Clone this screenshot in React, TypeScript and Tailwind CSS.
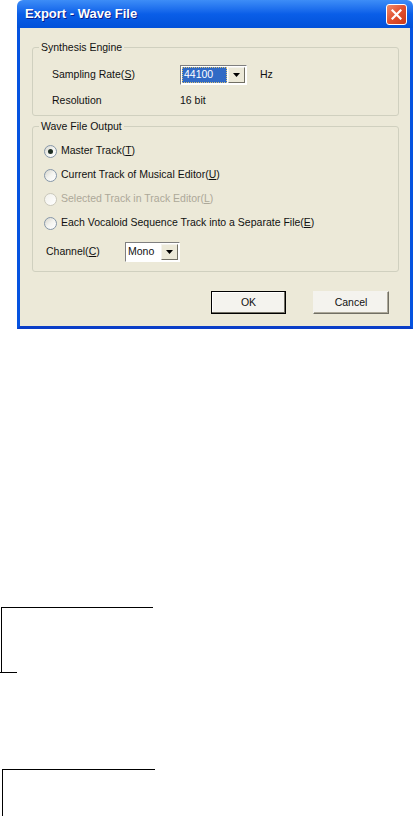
import React from "react";

const Radio = ({ checked, disabled }: { checked?: boolean; disabled?: boolean }) => (
  <span
    className={`flex h-[13px] w-[13px] shrink-0 items-center justify-center rounded-full border bg-gradient-to-br ${
      disabled
        ? "border-[#CAC8BB] from-[#F2F1EB] to-white"
        : "border-[#8596A8] from-[#D6D5CC] via-[#F4F4F0] to-white"
    }`}
  >
    {checked && <span className="h-[5px] w-[5px] rounded-full bg-[#1F2F24]" />}
  </span>
);

const Arrow = () => (
  <span className="flex h-full w-[17px] items-center justify-center border border-t-[#F4F3EE] border-l-[#F4F3EE] border-r-[#716F64] border-b-[#716F64] bg-[#ECE9D8]">
    <svg width="7" height="4" viewBox="0 0 7 4">
      <path d="M0 0h7L3.5 4z" fill="#000" />
    </svg>
  </span>
);

const Mn = ({ c }: { c: string }) => <span className="underline underline-offset-1">{c}</span>;

const App = () => {
  return (
    <div className="min-h-[816px] bg-white font-['Tahoma','Liberation_Sans',sans-serif] text-[10.5px] text-[#111]">
      {/* Dialog window */}
      <div className="ml-[17px] w-[396px]">
        <div className="flex h-[28px] items-center justify-between rounded-t-[6px] bg-gradient-to-b from-[#3D8DF7] via-[#0A5EE8] to-[#0251D9] pl-[8px] pr-[6px]">
          <span className="font-['Liberation_Sans',sans-serif] text-[13px] font-bold text-white [text-shadow:1px_1px_0_#0A1E8C]">
            Export - Wave File
          </span>
          <span className="flex h-[21px] w-[21px] items-center justify-center rounded-[3px] border border-white bg-gradient-to-br from-[#F08A6A] via-[#E0502E] to-[#C93A1A]">
            <svg width="11" height="11" viewBox="0 0 11 11">
              <path d="M1.5 1.5l8 8M9.5 1.5l-8 8" stroke="#fff" strokeWidth="2.2" strokeLinecap="square" />
            </svg>
          </span>
        </div>

        <div className="border-x-[3px] border-b-[3px] border-x-[#0553E0] border-b-[#0A3EC8] bg-[#ECE9D8] pb-[12px] pl-[12px] pr-[11px] pt-[13px]">
          {/* Synthesis Engine */}
          <fieldset className="rounded-[3px] border border-[#D0D0BF] pb-[8px]">
            <legend className="ml-[6px] px-[2px] leading-[13px]">Synthesis Engine</legend>
            <div className="pl-[19px]">
              <div className="mt-[11px] flex h-[20px] items-center">
                <span className="w-[128px]">
                  Sampling Rate(<Mn c="S" />)
                </span>
                <div className="flex h-[20px] w-[67px] items-center border border-t-[#7F7F7F] border-l-[#7F7F7F] border-r-white border-b-white bg-white p-[1px]">
                  <span className="mr-[1px] flex h-full flex-1 items-center border border-dotted border-[#D9C47A] bg-[#316AC5] pl-[1px] text-white">
                    44100
                  </span>
                  <Arrow />
                </div>
                <span className="ml-[13px]">Hz</span>
              </div>
              <div className="mt-[9px] flex h-[13px] items-center leading-[13px]">
                <span className="w-[128px]">Resolution</span>
                <span>16 bit</span>
              </div>
            </div>
          </fieldset>

          {/* Wave File Output */}
          <fieldset className="mt-[4px] rounded-[3px] border border-[#D0D0BF] pb-[9px]">
            <legend className="ml-[6px] px-[2px] leading-[13px]">Wave File Output</legend>
            <div className="mt-[10px] flex flex-col gap-[8px] pl-[11px]">
              <div className="flex h-[16px] items-center gap-[4px]">
                <Radio checked />
                <span>
                  Master Track(<Mn c="T" />)
                </span>
              </div>
              <div className="flex h-[16px] items-center gap-[4px]">
                <Radio />
                <span>
                  Current Track of Musical Editor(<Mn c="U" />)
                </span>
              </div>
              <div className="flex h-[16px] items-center gap-[4px] text-[#ACA899]">
                <Radio disabled />
                <span>
                  Selected Track in Track Editor(<Mn c="L" />)
                </span>
              </div>
              <div className="flex h-[16px] items-center gap-[4px]">
                <Radio />
                <span>
                  Each Vocaloid Sequence Track into a Separate File(<Mn c="E" />)
                </span>
              </div>
            </div>
            <div className="mt-[11px] flex h-[20px] items-center pl-[13px]">
              <span className="w-[79px]">
                Channel(<Mn c="C" />)
              </span>
              <div className="flex h-[20px] w-[55px] items-center border border-t-[#7F7F7F] border-l-[#7F7F7F] border-r-white border-b-white bg-white p-[1px]">
                <span className="flex-1 pl-[1px]">Mono</span>
                <Arrow />
              </div>
            </div>
          </fieldset>

          {/* Buttons */}
          <div className="mt-[19px] flex justify-end gap-[27px] pr-[10px]">
            <button className="h-[23px] w-[75px] border border-[#000] bg-[#F4F3EE] shadow-[inset_-1px_-1px_0_#716F64,inset_1px_1px_0_#fff]">
              OK
            </button>
            <button className="h-[23px] w-[76px] border border-[#F4F3EE] border-r-[#716F64] border-b-[#716F64] bg-[#F4F3EE] shadow-[inset_-1px_-1px_0_#ACA899]">
              Cancel
            </button>
          </div>
        </div>
      </div>

      {/* Lower brackets */}
      <div className="mt-[278px]">
        <div className="ml-px h-[65px] w-[152px] border-l border-t border-black" />
        <div className="h-px w-[17px] bg-black" />
      </div>
      <div className="ml-[2px] mt-[96px] h-[48px] w-[153px] border-l border-t border-black" />
    </div>
  );
};

export default App;
